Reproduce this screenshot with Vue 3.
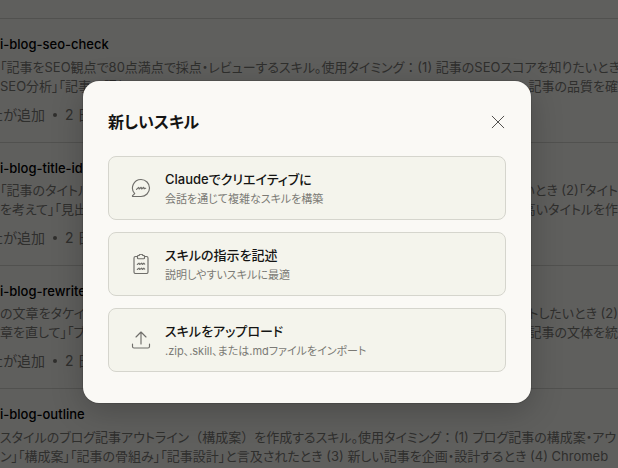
<script setup>
const skills = [
  {
    name: 'i-blog-seo-check',
    lines: [
      ['「記事をSEO観点で80点満点で採点・レビューするスキル。使用タイミング：(1) 記事のSEOスコアを知りたいとき (2'],
      ['SEO分析」「記事の評価」', '記事の品質を確'],
    ],
  },
  {
    name: 'i-blog-title-ideas',
    lines: [
      ['「記事のタイトル案', 'たいとき (2)「タイト'],
      ['を考えて」「見出し', '高いタイトルを作'],
    ],
  },
  {
    name: 'i-blog-rewrite',
    lines: [
      ['の文章をタケイスタ', 'イトしたいとき (2)'],
      ['章を直して」「ブロ', ') 記事の文体を統'],
    ],
  },
  {
    name: 'i-blog-outline',
    lines: [
      ['スタイルのブログ記事アウトライン（構成案）を作成するスキル。使用タイミング：(1) ブログ記事の構成案・アウトラ'],
      ['ン」「構成案」「記事の骨組み」「記事設計」と言及されたとき (3) 新しい記事を企画・設計するとき (4) Chromeb'],
    ],
  },
].map((skill) => ({
  ...skill,
  lines: skill.lines.map((line) => line.map((part) => part.split(/([：（）])/))),
}))

const isWide = (text) => /^[：（）]$/.test(text)

const options = [
  { icon: 'chat', title: 'Claudeでクリエイティブに', text: '会話を通じて複雑なスキルを構築' },
  { icon: 'clipboard', title: 'スキルの指示を記述', text: '説明しやすいスキルに最適' },
  { icon: 'upload', title: 'スキルをアップロード', text: '.zip、.skill、または.mdファイルをインポート' },
]
</script>

<template>
  <div class="page">
    <main class="list">
      <article v-for="skill in skills" :key="skill.name" class="skill">
        <h2 class="skill-name">{{ skill.name }}</h2>
        <div class="desc">
          <p v-for="(line, i) in skill.lines" :key="i" class="line">
            <span v-for="(part, j) in line" :key="j"><span v-for="(text, k) in part" :key="k" :class="{ wide: isWide(text) }">{{ text }}</span></span>
          </p>
        </div>
        <p class="meta"><span>たが追加</span><i class="dot"></i><span>2 日前</span></p>
      </article>
    </main>

    <div class="overlay">
      <section class="dialog" role="dialog" aria-modal="true" aria-labelledby="dialog-title">
        <header class="head">
          <h1 id="dialog-title" class="title">新しいスキル</h1>
          <button class="close" type="button" aria-label="閉じる">
            <svg width="16" height="16" viewBox="0 0 16 16" fill="none" stroke="currentColor" stroke-linecap="round">
              <path d="M2.2 2.2 13.8 13.8M13.8 2.2 2.2 13.8" />
            </svg>
          </button>
        </header>
        <div class="options">
          <button v-for="option in options" :key="option.icon" class="option" type="button">
            <svg class="icon" viewBox="0 0 20 20" fill="none" stroke="currentColor" stroke-width="1.15" stroke-linecap="round" stroke-linejoin="round">
              <template v-if="option.icon === 'chat'">
                <path d="M10 1.500a8.500 8.500 0 1 1 0 17H1.900c-.4 0-.6-.5-.3-.8L3.700 15.700A8.500 8.500 0 0 1 10 1.500Z" />
                <path d="M5.500 11.400 7.700 9.300l.5 1.700 2-1.700.5 1.700 2-1.700.5 1.500 1.500-.5" />
              </template>
              <template v-else-if="option.icon === 'clipboard'">
                <path d="M6.500 2.500h-2A1.500 1.500 0 0 0 3 4v14a1.500 1.500 0 0 0 1.500 1.500h11A1.500 1.500 0 0 0 17 18V4a1.500 1.500 0 0 0-1.500-1.500h-2" />
                <path d="M6.500 2.300c0-.5.3-.8.8-.8h.8a2 2 0 0 1 3.800 0h.8c.5 0 .8.3.8.8v1.600c0 .5-.3.800-.8.800H7.300c-.5 0-.8-.3-.8-.8Z" />
                <path d="m6.300 10.500 1.700-1.400.7 1.400 1.900-1.400.7 1.400 1.500-1.300.9.900M6.300 15.500 8 14.100l.7 1.400 1.900-1.400.7 1.400 1.500-1.300.9.900" />
              </template>
              <template v-else>
                <path d="M10 14V2M5 7l5-5 5 5" />
                <path d="M1.500 14v2.500A1.500 1.500 0 0 0 3 18h14a1.500 1.500 0 0 0 1.500-1.500V14" />
              </template>
            </svg>
            <span class="copy">
              <span class="option-title">{{ option.title }}</span>
              <span class="option-text">{{ option.text }}</span>
            </span>
          </button>
        </div>
      </section>
    </div>
  </div>
</template>

<style>
body {
  background: #faf9f5;
  overflow: hidden;
}
</style>

<style scoped>
.page {
  position: relative;
  height: 100vh;
  overflow: hidden;
  font-family: Inter, "Noto Sans CJK JP", sans-serif;
  font-feature-settings: "palt";
  color: #141413;
}
h1, h2, p {
  margin: 0;
}
.list {
  padding-top: 18px;
}
.skill {
  border-top: 1px solid #d6d5cf;
  padding: 15px 0 18px;
}
.skill-name {
  font-size: 13px;
  line-height: 20px;
  font-weight: 500;
  color: #000;
}
.desc {
  margin-top: 3px;
}
.line {
  display: flex;
  justify-content: space-between;
  font-size: 13px;
  line-height: 19px;
  color: #7c7b77;
  white-space: nowrap;
}
.wide {
  font-family: "Noto Sans CJK JP", sans-serif;
  font-feature-settings: normal;
}
.meta {
  display: flex;
  align-items: center;
  gap: 8px;
  margin: 9px 0 0 -10px;
  font-size: 14px;
  line-height: 19px;
  color: #7c7b77;
}
.dot {
  width: 4px;
  height: 4px;
  border-radius: 50%;
  background: currentColor;
}
.overlay {
  position: absolute;
  inset: 0;
  display: flex;
  align-items: center;
  justify-content: center;
  padding: 16px 4px 0 0;
  background: rgba(0, 0, 0, 0.62);
}
.dialog {
  box-sizing: border-box;
  width: 100%;
  max-width: 448px;
  padding: 24px 25px 31px;
  border-radius: 16px;
  background: #faf9f5;
  box-shadow: 0 8px 32px rgba(0, 0, 0, 0.22), 0 0 0 1px rgba(0, 0, 0, 0.1);
}
.head {
  display: flex;
  align-items: center;
  justify-content: space-between;
  margin-bottom: 17px;
}
.title {
  font-size: 16px;
  line-height: 34px;
  font-weight: 600;
}
.close {
  display: flex;
  padding: 0;
  border: 0;
  background: none;
  color: #52514e;
}
.options {
  display: grid;
  gap: 12px;
}
.option {
  display: flex;
  align-items: center;
  gap: 14px;
  min-height: 64px;
  padding: 0 22px;
  border: 1px solid #d5d5cd;
  border-radius: 8px;
  background: #f4f4ec;
  color: inherit;
  font: inherit;
  font-feature-settings: inherit;
  text-align: left;
}
.icon {
  flex: none;
  width: 20px;
  height: 20px;
  color: #6f6e6a;
}
.copy {
  display: grid;
  padding-top: 1px;
}
.option-title {
  font-size: 13px;
  line-height: 20px;
  font-weight: 500;
}
.option-text {
  font-size: 11px;
  line-height: 20px;
  color: #7b7a75;
}
</style>
